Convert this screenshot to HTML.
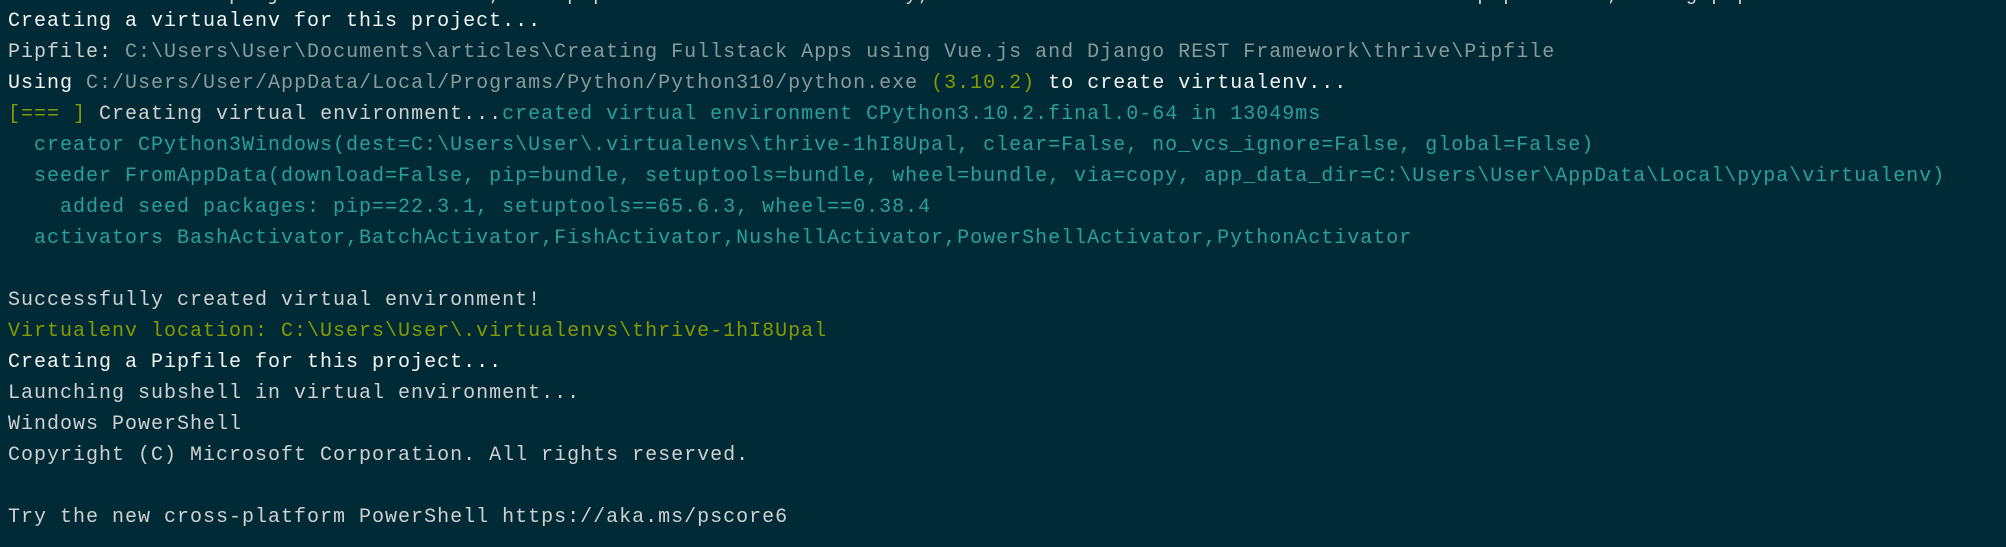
<!DOCTYPE html>
<html><head><meta charset="utf-8"><style>
html,body{margin:0;padding:0;background:#012a37;width:2006px;height:547px;overflow:hidden}
pre{margin:0;position:absolute;left:8px;top:6px;font-family:"Liberation Mono",monospace;font-size:20px;letter-spacing:1px;line-height:31px;color:#d4d4d4;white-space:pre}
.top{top:-20px}
.w{color:#f4f4f4}
.g{color:#8a9a9c}
.c{color:#2aa198}
.y{color:#859900}
.l{color:#d0d0d0}
</style></head><body>
<pre class="top"><span class="l">To activate this project's virtualenv, run pipenv shell. Alternatively, run a command inside the virtualenv with pipenv run, using pipenv.</span></pre>
<pre><span class="w">Creating a virtualenv for this project...</span>
<span class="l">Pipfile:</span> <span class="g">C:\Users\User\Documents\articles\Creating Fullstack Apps using Vue.js and Django REST Framework\thrive\Pipfile</span>
<span class="w">Using</span> <span class="g">C:/Users/User/AppData/Local/Programs/Python/Python310/python.exe</span> <span class="y">(3.10.2)</span> <span class="w">to create virtualenv...</span>
<span class="y">[=== ]</span> <span class="l">Creating virtual environment...</span><span class="c">created virtual environment CPython3.10.2.final.0-64 in 13049ms</span>
<span class="c">  creator CPython3Windows(dest=C:\Users\User\.virtualenvs\thrive-1hI8Upal, clear=False, no_vcs_ignore=False, global=False)</span>
<span class="c">  seeder FromAppData(download=False, pip=bundle, setuptools=bundle, wheel=bundle, via=copy, app_data_dir=C:\Users\User\AppData\Local\pypa\virtualenv)</span>
<span class="c">    added seed packages: pip==22.3.1, setuptools==65.6.3, wheel==0.38.4</span>
<span class="c">  activators BashActivator,BatchActivator,FishActivator,NushellActivator,PowerShellActivator,PythonActivator</span>

<span class="l">Successfully created virtual environment!</span>
<span class="y">Virtualenv location: C:\Users\User\.virtualenvs\thrive-1hI8Upal</span>
<span class="w">Creating a Pipfile for this project...</span>
<span class="l">Launching subshell in virtual environment...</span>
<span class="l">Windows PowerShell</span>
<span class="l">Copyright (C) Microsoft Corporation. All rights reserved.</span>

<span class="l">Try the new cross-platform PowerShell https://aka.ms/pscore6</span>
</pre>
</body></html>
